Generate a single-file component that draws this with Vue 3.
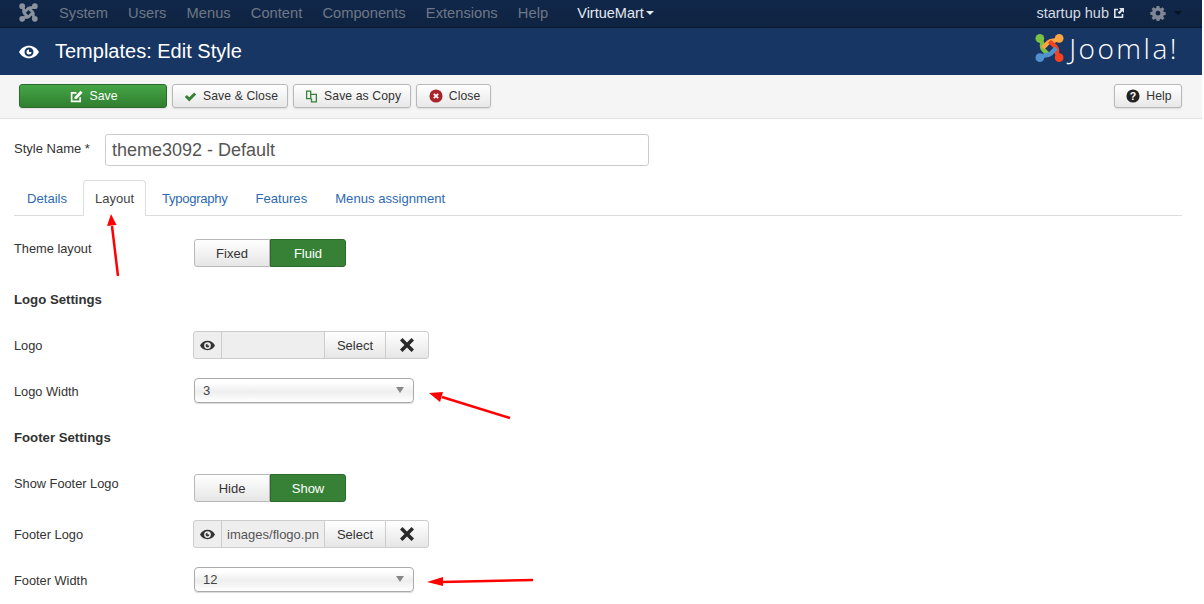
<script setup>
const menu = ['System', 'Users', 'Menus', 'Content', 'Components', 'Extensions', 'Help']
const tabs = ['Details', 'Layout', 'Typography', 'Features', 'Menus assignment']
const eye = 'M8 3C4.5 3 1.6 5 0 8c1.6 3 4.5 5 8 5s6.400-2 8-5c-1.600-3-4.500-5-8-5zm0 8.600A3.600 3.600 0 1 1 8 4.400a3.600 3.600 0 0 1 0 7.200zM8 6a2 2 0 1 0 2 2H8V6z'
const cross = 'M3.500 1 8 5.500 12.500 1 15 3.500 10.500 8 15 12.500 12.500 15 8 10.500 3.500 15 1 12.500 5.500 8 1 3.500z'
const arms = [
  { c: '#7ac143', d: 'M15 23 8.500 16.500Q6.500 14 7.500 10L5 5' },
  { c: '#f9a541', d: 'M8 15 14 9Q16.500 7 20 7.500L25 5' },
  { c: '#f44321', d: 'M15 8 21.500 14Q23.500 16.500 22.500 20L25 25' },
  { c: '#5091cd', d: 'M22 15 16 21Q13.500 23 10 22.500L5 25' }
]
const blobs = [
  { c: '#7ac143', x: 5, y: 5 },
  { c: '#f9a541', x: 25, y: 5 },
  { c: '#f44321', x: 25, y: 25 },
  { c: '#5091cd', x: 5, y: 25 }
]
</script>

<template>
  <div class="page">
    <nav class="topbar">
      <svg class="brand" viewBox="0 0 30 30" width="19" height="19">
        <path v-for="a in arms" :key="a.c" :d="a.d" fill="none" stroke="#8a929d" stroke-width="4.500" />
        <circle v-for="b in blobs" :key="b.c" :cx="b.x" :cy="b.y" r="4.500" fill="#8a929d" />
      </svg>
      <span v-for="m in menu" :key="m" class="menu-item">{{ m }}</span>
      <span class="menu-active">VirtueMart<i class="caret"></i></span>
      <span class="spacer"></span>
      <span class="site">startup hub
        <svg viewBox="0 0 12 12" width="12" height="12">
          <path fill="none" stroke="#dfe5ec" stroke-width="1.600" d="M9.500 7v3.200H1.800V2.500H5" />
          <path fill="#dfe5ec" d="M6 1h5v5L9.300 4.300 6.500 7.200 4.800 5.500l2.900-2.800z" />
        </svg>
      </span>
      <svg class="gear" viewBox="-1 -1 18 18" width="16" height="16">
        <path fill="#7d8692" fill-rule="evenodd" d="M6.500 0h3l.4 2.200 1.300.6L13.100 1.500l2.100 2.100-1.300 1.900.6 1.300 2.200.4v3l-2.200.4-.6 1.300 1.300 1.900-2.100 2.100-1.900-1.300-1.300.6-.4 2.200h-3l-.4-2.200-1.300-.6-1.900 1.300L.8 13.500l1.300-1.900-.6-1.300L-.7 9.900v-3l2.200-.4.600-1.300L.8 3.600 2.900 1.500l1.900 1.300 1.300-.6zM8 5.500a2.700 2.700 0 1 0 0 5.400 2.700 2.700 0 0 0 0-5.400z" />
      </svg>
      <i class="caret dark"></i>
    </nav>

    <header class="titlebar">
      <svg viewBox="0 0 16 16" width="20" height="20"><path fill="#fff" :d="eye" /></svg>
      <h1>Templates: Edit Style</h1>
      <div class="logo">
        <svg viewBox="0 0 30 30" width="29" height="30">
          <path v-for="a in arms" :key="a.c" :d="a.d" fill="none" :stroke="a.c" stroke-width="4.500" />
          <circle v-for="b in blobs" :key="b.c" :cx="b.x" :cy="b.y" r="4.500" :fill="b.c" />
        </svg>
        <span class="logo-text">Joomla!</span>
      </div>
    </header>

    <div class="toolbar">
      <button class="btn save">
        <svg viewBox="0 0 16 16" width="13" height="13"><path fill="none" stroke="#fff" stroke-width="2" d="M12.500 9v5H2V3.500h6" /><path fill="#fff" d="M13 1l2.500 2.500L8 11H5.500V8.500z" /></svg>
        Save
      </button>
      <button class="btn">
        <svg viewBox="0 0 16 16" width="13" height="13"><path fill="#378137" d="M1 8.500 3.500 6l3 3L12.500 3 15 5.500 6.500 14z" /></svg>
        Save &amp; Close
      </button>
      <button class="btn">
        <svg viewBox="0 0 16 16" width="13" height="13"><path fill="none" stroke="#378137" stroke-width="1.600" d="M2 1.500h5v9H2zM7 5.500h7v9H8v-4" /></svg>
        Save as Copy
      </button>
      <button class="btn close">
        <svg viewBox="0 0 16 16" width="14" height="14"><circle cx="8" cy="8" r="7.500" fill="#a9232b" /><path stroke="#fff" stroke-width="2" d="M5.500 5.500l5 5m0-5-5 5" /></svg>
        Close
      </button>
      <span class="spacer"></span>
      <button class="btn help">
        <svg viewBox="0 0 16 16" width="14" height="14"><circle cx="8" cy="8" r="7.500" fill="#222" /><text x="8" y="12" text-anchor="middle" class="q">?</text></svg>
        Help
      </button>
    </div>

    <main class="content">
      <div class="name-row">
        <label>Style Name *</label>
        <div class="name-input">theme3092 - Default</div>
      </div>

      <div class="tabs">
        <span v-for="t in tabs" :key="t" class="tab" :class="{ active: t === 'Layout' }">{{ t }}</span>
      </div>

      <div class="row first">
        <label>Theme layout</label>
        <div class="toggle"><span>Fixed</span><span class="on">Fluid</span></div>
      </div>

      <h4>Logo Settings</h4>

      <div class="row media-row">
        <label>Logo</label>
        <div class="media">
          <span class="add-on"><svg viewBox="0 0 16 16" width="15" height="15"><path fill="#333" :d="eye" /></svg></span>
          <span class="path"></span>
          <span class="sel">Select</span>
          <span class="clear"><svg viewBox="0 0 16 16" width="16" height="16"><path fill="#2a2a2a" :d="cross" /></svg></span>
        </div>
      </div>

      <div class="row select-row">
        <label>Logo Width</label>
        <div class="select">3<i class="down"></i></div>
      </div>

      <h4 class="second">Footer Settings</h4>

      <div class="row">
        <label>Show Footer Logo</label>
        <div class="toggle"><span>Hide</span><span class="on">Show</span></div>
      </div>

      <div class="row media-row">
        <label>Footer Logo</label>
        <div class="media">
          <span class="add-on"><svg viewBox="0 0 16 16" width="15" height="15"><path fill="#333" :d="eye" /></svg></span>
          <span class="path">images/flogo.pn</span>
          <span class="sel">Select</span>
          <span class="clear"><svg viewBox="0 0 16 16" width="16" height="16"><path fill="#2a2a2a" :d="cross" /></svg></span>
        </div>
      </div>

      <div class="row select-row">
        <label>Footer Width</label>
        <div class="select">12<i class="down"></i></div>
      </div>
    </main>

    <svg class="arrows" width="1204" height="604" viewBox="0 0 1204 604">
      <g stroke="#f00" stroke-width="2.500" fill="none">
        <path d="M118 276 112 226" />
        <path d="M510 418 442 397" />
        <path d="M533 580 442 582" />
      </g>
      <g fill="#f00">
        <path d="M111 214 107 226 116.500 225z" />
        <path d="M429 393 443 392 440 402z" />
        <path d="M427 582 443 577 443 586z" />
      </g>
    </svg>
  </div>
</template>

<style>
html, body { margin: 0; background: #fff; overflow: hidden; }
</style>

<style scoped>
.page {
  position: relative;
  width: 1204px;
  height: 604px;
  overflow: hidden;
  background: #fff;
  font-family: "Liberation Sans", Arial, sans-serif;
  font-size: 13px;
  color: #333;
}
.spacer { flex: 1; }
.topbar {
  width: 1202px;
  height: 28px;
  box-sizing: border-box;
  display: flex;
  align-items: center;
  padding: 0 20px 2px 19px;
  background: linear-gradient(#11274a, #0f2341);
  border-bottom: 1px solid #0b1a30;
  font-size: 14.700px;
}
.brand { margin-right: 21px; }
.menu-item { color: #6d7785; margin-right: 20.150px; }
.menu-active { color: #e4e9ef; margin-left: 9px; display: flex; align-items: center; font-size: 14.500px; }
.caret {
  display: inline-block;
  width: 0; height: 0;
  margin-left: 2px;
  border-left: 4px solid transparent;
  border-right: 4px solid transparent;
  border-top: 4px solid #e4e9ef;
}
.caret.dark { border-top-color: #07111f; margin-left: 8px; }
.site { color: #d3dae3; display: flex; align-items: center; gap: 4px; margin-right: 25px; font-size: 14.500px; }
.titlebar {
  width: 1202px;
  height: 47px;
  box-sizing: border-box;
  display: flex;
  align-items: center;
  padding: 0 0 0 19px;
  background: #183664;
  color: #fff;
}
.titlebar h1 {
  margin: 0 0 0 16px;
  font-size: 20px;
  font-weight: 400;
  line-height: 47px;
}
.logo {
  margin-left: auto;
  margin-right: 23px;
  align-self: flex-start;
  padding-top: 5px;
  display: flex;
  align-items: flex-start;
}
.logo-text {
  font-family: "Open Sans", "Liberation Sans", sans-serif;
  font-size: 28px;
  font-weight: 300;
  line-height: 30px;
  margin-left: 5px;
  letter-spacing: 2.500px;
}
.toolbar {
  width: 1202px;
  height: 44px;
  box-sizing: border-box;
  display: flex;
  align-items: center;
  padding: 0 20px 1px 19px;
  gap: 5px;
  background: #f5f5f5;
  border-bottom: 1px solid #e2e2e2;
}
.btn {
  height: 24px;
  box-sizing: border-box;
  display: inline-flex;
  align-items: center;
  justify-content: center;
  gap: 6px;
  padding: 0 9px 0 11px;
  border: 1px solid #b8b8b8;
  border-radius: 3px;
  background: linear-gradient(#fff, #e8e8e8);
  font-family: inherit;
  font-size: 12.200px;
  letter-spacing: .1px;
  color: #333;
  box-shadow: 0 1px 2px rgba(0,0,0,.1);
}
.btn.save {
  width: 148px;
  border-color: #2d6a2d;
  background: linear-gradient(#46a546, #2f7f2f);
  color: #fff;
}
.btn.close { width: 75px; }
.btn.help { width: 68px; }
.q { font: bold 12px "Liberation Sans", Arial, sans-serif; fill: #fff; }
.content {
  width: 1182px;
  box-sizing: border-box;
  padding-left: 14px;
}
.name-row { display: flex; align-items: flex-start; margin-top: 15px; }
.name-row label { width: 91px; padding-top: 7px; font-size: 13px; line-height: 15px; }
.name-input {
  width: 544px;
  height: 32px;
  box-sizing: border-box;
  padding: 0 6px;
  border: 1px solid #ccc;
  border-radius: 3px;
  font-size: 18px;
  line-height: 31px;
  color: #555;
}
.tabs {
  display: flex;
  margin-top: 14px;
  height: 36px;
  box-sizing: border-box;
  border-bottom: 1px solid #ddd;
  align-items: flex-end;
}
.tab {
  height: 35px;
  box-sizing: border-box;
  padding: 0 13px;
  line-height: 35px;
  font-size: 13.100px;
  color: #2e6ab1;
  border: 1px solid transparent;
  border-bottom: 0;
}
.tab:first-child { margin-left: -1px; }
.tab:nth-child(3) { letter-spacing: -.3px; }
.tab.active {
  height: 36px;
  margin: 0 2px -1px;
  padding: 0 11px;
  line-height: 35px;
  font-size: 13px;
  background: #fff;
  color: #444;
  border-color: #ddd;
  border-radius: 4px 4px 0 0;
}
.row { display: flex; align-items: flex-start; }
.row label { width: 179px; font-size: 12.800px; line-height: 15px; padding-top: 2px; flex-shrink: 0; }
.row.first { margin-top: 23px; }
.toggle { display: flex; height: 28px; box-sizing: border-box; margin-left: 1px; }
.toggle span {
  width: 76px;
  box-sizing: border-box;
  text-align: center;
  line-height: 27px;
  font-size: 13px;
  border: 1px solid #b8b8b8;
  background: linear-gradient(#fff, #e6e6e6);
  border-radius: 3px 0 0 3px;
}
.toggle .on {
  background: #378137;
  color: #fff;
  border-color: #2b6a2b;
  border-radius: 0 3px 3px 0;
}
h4 {
  margin: 23px 0 0;
  height: 21px;
  font-size: 13.200px;
  font-weight: 700;
  line-height: 15px;
  padding-top: 2px;
  box-sizing: content-box;
}
h4.second { margin-top: 25px; height: 44px; }
.media-row { margin-top: 18px; }
.media-row label { padding-top: 7px; }
.media { display: flex; height: 28px; box-sizing: border-box; }
.media > span {
  display: flex;
  align-items: center;
  justify-content: center;
  box-sizing: border-box;
  height: 28px;
  border: 1px solid #ccc;
  margin-left: -1px;
}
.add-on { width: 29px; background: #eee; border-radius: 3px 0 0 3px; margin-left: 0 !important; }
.path { width: 104px; background: #eee; color: #555; font-size: 13px; overflow: hidden; white-space: nowrap; }
.sel { width: 62px; background: linear-gradient(#fff, #e6e6e6); font-size: 13px; }
.clear { width: 44px; background: linear-gradient(#fff, #e6e6e6); border-radius: 0 3px 3px 0; }
.select-row { margin-top: 19px; }
.select-row label { padding-top: 6px; }
.select {
  position: relative;
  width: 220px;
  height: 25px;
  margin-left: 1px;
  box-sizing: border-box;
  padding-left: 8px;
  border: 1px solid #aaa;
  border-radius: 4px;
  background: linear-gradient(#fff 15%, #eee 55%, #fff);
  line-height: 23px;
  font-size: 13px;
  color: #444;
  box-shadow: 0 1px 1px rgba(0,0,0,.15);
}
.down {
  position: absolute;
  right: 9px;
  top: 8px;
  width: 0; height: 0;
  border-left: 4px solid transparent;
  border-right: 4px solid transparent;
  border-top: 6px solid #888;
}
.arrows { position: absolute; left: 0; top: 0; pointer-events: none; }
</style>
